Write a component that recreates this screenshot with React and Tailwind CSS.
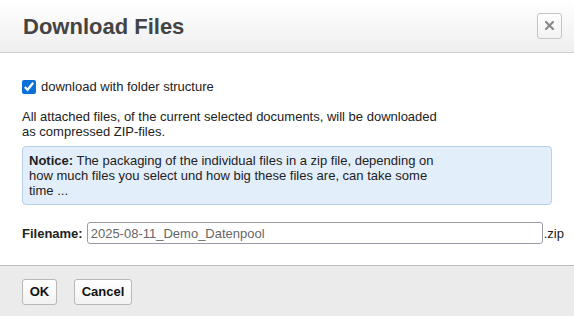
import React, { useState } from 'react';

const App = () => {
  const [withFolders, setWithFolders] = useState(true);
  const [filename, setFilename] = useState('2025-08-11_Demo_Datenpool');

  return (
    <div className="w-[574px] h-[316px] flex flex-col bg-white font-['Liberation_Sans',Arial,sans-serif] text-[13px] leading-[15px] text-[#222]">
      {/* header */}
      <div className="h-[53px] shrink-0 flex items-center justify-between pl-[23px] pr-[12px] border-b border-[#cfcfcf] bg-gradient-to-b from-white to-[#efefef]">
        <h2 className="text-[22px] leading-[26px] font-bold text-[#444] mt-[1px]">Download Files</h2>
        <button
          type="button"
          className="w-[25px] h-[26px] mb-[1px] flex items-center justify-center rounded-[3px] border border-[#c4c4c4] bg-gradient-to-b from-white to-[#f3f3f3]"
        >
          <svg width="9" height="9" viewBox="0 0 9 9">
            <path d="M1 1 L8 8 M8 1 L1 8" stroke="#8a8a8a" strokeWidth="2.2" strokeLinecap="square" />
          </svg>
        </button>
      </div>

      {/* body */}
      <div className="flex-1 px-[22px] pt-[26px]">
        <label className="flex items-center h-[15px] gap-[5px] cursor-pointer">
          <input
            type="checkbox"
            checked={withFolders}
            onChange={(e) => setWithFolders(e.target.checked)}
            className="w-[14px] h-[14px] m-0 accent-[#0b6fd8]"
          />
          <span>download with folder structure</span>
        </label>

        <p className="mt-[15px] w-[426px]">
          All attached files, of the current selected documents, will be downloaded as compressed ZIP-files.
        </p>

        <div className="mt-[7px] rounded-[4px] border border-[#b9d0ea] bg-[#e3eefb] px-[6px] py-[6px]">
          <p className="w-[426px]">
            <b>Notice:</b> The packaging of the individual files in a zip file, depending on how much files you select und how big these files are, can take some time ...
          </p>
        </div>

        <div className="mt-[17px] flex items-center">
          <span className="shrink-0 font-bold mr-[4px]">Filename:</span>
          <input
            type="text"
            value={filename}
            onChange={(e) => setFilename(e.target.value)}
            className="shrink-0 w-[456px] h-[22px] px-[3px] rounded-[3px] border border-[#999aa6] text-[13px] text-[#666] outline-none font-['Liberation_Sans',Arial,sans-serif]"
          />
          <span className="shrink-0 ml-[1px]">.zip</span>
        </div>
      </div>

      {/* footer */}
      <div className="h-[51px] shrink-0 flex items-center gap-[17px] px-[22px] border-t border-[#bdbdbd] bg-[#ebebeb]">
        <button
          type="button"
          className="h-[26px] w-[35px] mt-[1px] rounded-[3px] border border-[#b8b8b8] bg-gradient-to-b from-white to-[#f2f2f2] font-bold text-[13px] text-[#111]"
        >
          OK
        </button>
        <button
          type="button"
          className="h-[26px] w-[58px] mt-[1px] rounded-[3px] border border-[#b8b8b8] bg-gradient-to-b from-white to-[#f2f2f2] font-bold text-[13px] text-[#111]"
        >
          Cancel
        </button>
      </div>
    </div>
  );
};

export default App;
